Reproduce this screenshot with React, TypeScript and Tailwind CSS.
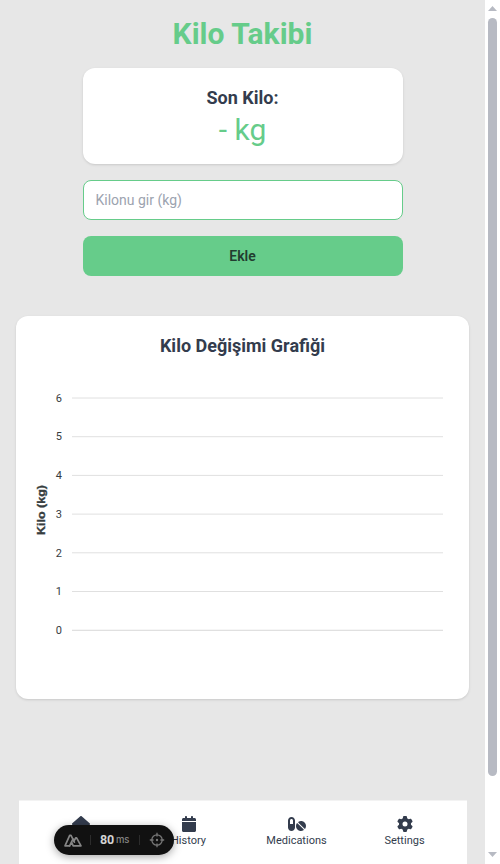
import type { ReactNode } from "react";
import { FaCalendar, FaGear, FaHouse, FaPills } from "react-icons/fa6";

const ticks = [6, 5, 4, 3, 2, 1, 0];

function WeightChart() {
  return (
    <svg width="421" height="302" className="block">
      {ticks.map((t, i) => {
        const y = 24 + i * 38.7;
        return (
          <g key={t}>
            <line x1="40" x2="411" y1={y} y2={y} stroke="#e0e0e0" strokeWidth="1" />
            <text x="30" y={Math.floor(y + 0.25) + 4} textAnchor="end" fontSize="11" fill="#373d3f">
              {t}
            </text>
          </g>
        );
      })}
      <line x1="40" x2="411" y1="256.5" y2="256.5" stroke="#e0e0e0" strokeWidth="1" />
      <text
        transform="translate(13 136) rotate(-90)"
        textAnchor="middle"
        fontSize="11"
        fontWeight="900"
        fill="#373d3f"
        stroke="#373d3f"
        strokeWidth="0.35"
        textLength="50"
        lengthAdjust="spacingAndGlyphs"
        className="font-['Liberation_Sans',Arial,sans-serif]"
      >
        Kilo (kg)
      </text>
    </svg>
  );
}

function NavItem({ icon, label }: { icon: ReactNode; label: string }) {
  return (
    <a className="flex flex-1 flex-col items-center text-[#333c4d]">
      <span className="flex h-4 items-center">{icon}</span>
      <span className="mt-px text-[11px] leading-4">{label}</span>
    </a>
  );
}

function DevBadge() {
  return (
    <div className="absolute left-[54px] top-[825px] flex h-[30px] w-[120px] items-center rounded-full bg-[#111] shadow-[0_2px_8px_rgba(0,0,0,0.35)]">
      <svg width="18" height="13" viewBox="0 0 18 13" className="ml-[10px] shrink-0" fill="none" stroke="#858585" strokeWidth="1.7" strokeLinejoin="round" strokeLinecap="round">
        <path d="M5.6 11.8H1L5.7 1.4H7L10.4 8.2" />
        <path d="M5.6 11.8 9 5M9.2 11.8H17L12.6 3.8H11.8L9.8 7.2M9.2 11.8 7.8 8.6" />
      </svg>
      <span className="ml-[8px] h-[10px] w-px shrink-0 bg-[#2c2c2c]" />
      <span className="ml-[9px] w-[14px] text-[12.5px] font-bold leading-none tracking-[-0.2px] text-[#d4d4d4]">80</span>
      <span className="ml-[2px] w-[14px] font-['Inter',sans-serif] text-[9.5px] font-medium leading-none tracking-[-0.2px] text-[#858585]">ms</span>
      <span className="ml-[9px] h-[10px] w-px shrink-0 bg-[#2c2c2c]" />
      <svg width="16" height="16" viewBox="0 0 16 16" className="ml-[9px] shrink-0" fill="none" stroke="#777" strokeWidth="1.3">
        <circle cx="8" cy="8" r="5.2" />
        <path d="M8 .8v3.8M8 11.4v3.8M.8 8h3.8M11.4 8h3.8" />
        <circle cx="8" cy="8" r="1.2" fill="#777" stroke="none" />
      </svg>
    </div>
  );
}

export default function App() {
  return (
    <div className="relative flex h-[864px] w-[500px] overflow-hidden bg-white font-['Roboto',sans-serif] text-[#333c4d]">
      <div className="flex w-[485px] flex-col items-center bg-[#e7e7e7] pt-4">
        <h1 className="text-3xl font-bold text-[#66cc8a]">Kilo Takibi</h1>

        <section className="mt-4 flex h-24 w-80 flex-col items-center rounded-xl bg-white pt-4 shadow-sm">
          <h2 className="text-lg font-bold">Son Kilo:</h2>
          <p className="text-3xl text-[#66cc8a]">- kg</p>
        </section>

        <input
          type="text"
          placeholder="Kilonu gir (kg)"
          className="mt-4 h-10 w-80 rounded-lg border border-[#66cc8a] bg-white px-3 text-sm placeholder:text-[#9ca3af]"
        />
        <button className="mt-4 h-10 w-80 rounded-lg bg-[#66cc8a] text-sm font-semibold text-[#223d30]">
          Ekle
        </button>

        <section className="mt-10 h-[383px] w-[453px] rounded-xl bg-white p-4 shadow-sm">
          <h2 className="mb-[14px] text-center text-lg font-bold">Kilo Değişimi Grafiği</h2>
          <WeightChart />
        </section>

        <nav className="mt-auto flex h-16 w-[448px] border-t border-[#f3f3f3] bg-white px-2 pt-[15px]">
          <NavItem icon={<FaHouse className="h-4 w-[18px]" />} label="Home" />
          <NavItem icon={<FaCalendar className="h-4 w-[14px]" />} label="History" />
          <NavItem icon={<FaPills className="h-4 w-[18px]" />} label="Medications" />
          <NavItem icon={<FaGear className="h-4 w-4" />} label="Settings" />
        </nav>
      </div>

      <div className="flex w-[15px] flex-col pl-[3px]">
        <svg width="9" height="5" className="mt-[6px]" fill="#b7bac3">
          <path d="M0 5 4.5 0 9 5Z" />
        </svg>
        <div className="mt-[7px] h-[758px] w-[9px] rounded-full bg-[#b7bac3]" />
        <svg width="9" height="5" className="mb-[7px] mt-auto" fill="#b7bac3">
          <path d="M0 0h9L4.5 5Z" />
        </svg>
      </div>
      <DevBadge />
    </div>
  );
}
